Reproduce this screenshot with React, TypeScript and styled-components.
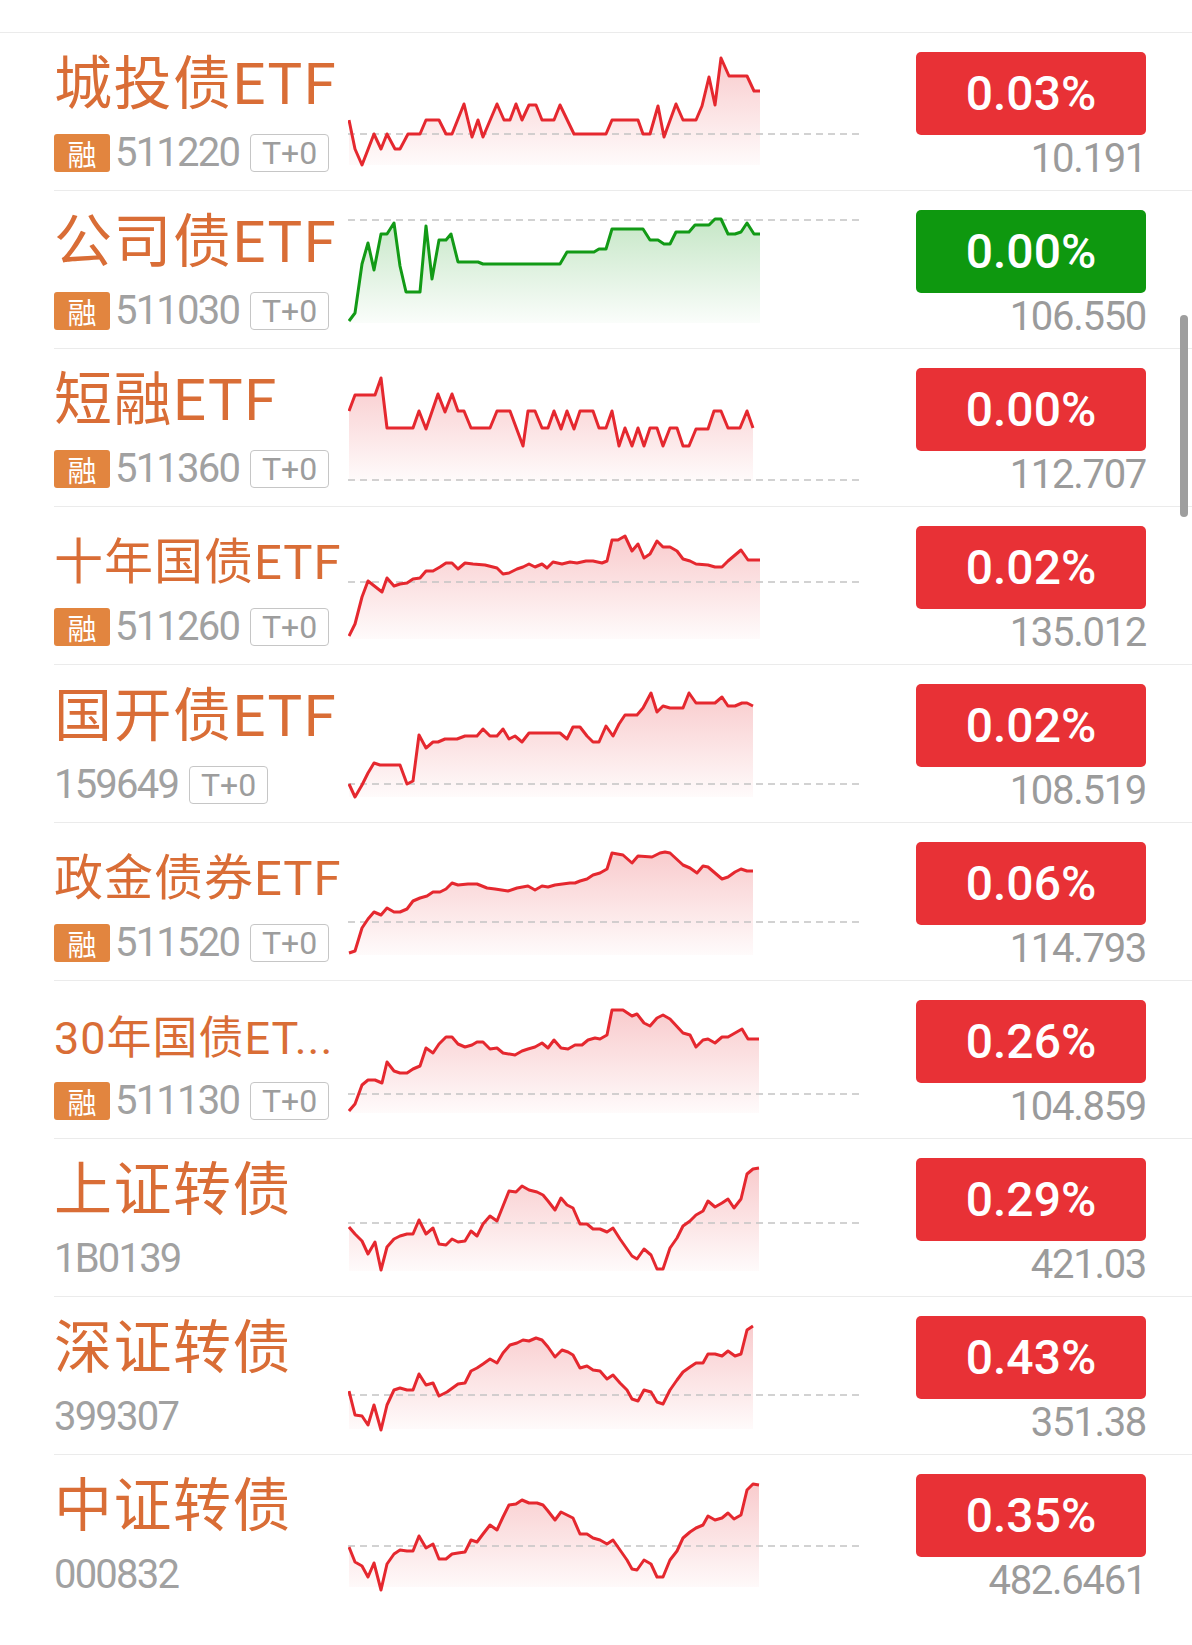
import React from "react";
import styled, { createGlobalStyle } from "styled-components";

type Pt = [number, number];

interface Fund {
  name: string;
  size: number;
  margin: boolean;
  code: string;
  t0: boolean;
  change: string;
  up: boolean;
  price: string;
  base: number;
  line: Pt[];
}

const funds: Fund[] = [
  {
    name: "城投债ETF", size: 58, margin: true, code: "511220", t0: true,
    change: "0.03%", up: true, price: "10.191", base: 101,
    line: [[1,87],[7,116],[14,132],[26,101],[33,116],[39,101],[47,116],[52,116],[60,101],[72,101],[78,87],[91,87],[98,101],[104,101],[116,71],[124,104],[130,87],[135,104],[149,71],[156,87],[162,87],[168,71],[174,87],[181,72],[188,72],[194,87],[206,87],[212,72],[226,101],[258,101],[264,87],[290,87],[295,101],[302,101],[310,73],[316,104],[328,71],[335,87],[348,87],[354,73],[361,44],[367,72],[373,25],[381,43],[399,43],[406,58],[412,58]],
  },
  {
    name: "公司债ETF", size: 58, margin: true, code: "511030", t0: true,
    change: "0.00%", up: false, price: "106.550", base: 29,
    line: [[1,130],[7,122],[14,73],[20,52],[26,79],[33,43],[39,43],[46,32],[52,75],[58,101],[72,101],[78,35],[84,88],[91,49],[98,49],[103,43],[110,71],[130,71],[135,73],[212,73],[219,61],[246,61],[251,58],[258,58],[264,38],[295,38],[302,49],[310,49],[316,53],[322,53],[328,41],[341,41],[347,34],[361,34],[367,28],[373,28],[380,43],[387,43],[393,41],[399,32],[406,43],[412,43]],
  },
  {
    name: "短融ETF", size: 58, margin: true, code: "511360", t0: true,
    change: "0.00%", up: true, price: "112.707", base: 131,
    line: [[1,62],[7,46],[27,46],[33,29],[39,79],[65,79],[71,62],[78,80],[90,45],[97,63],[104,45],[110,62],[116,62],[123,79],[142,79],[149,62],[162,62],[175,97],[180,62],[187,62],[194,79],[200,79],[206,62],[213,80],[219,62],[226,80],[232,62],[245,62],[251,79],[258,79],[264,62],[271,97],[277,79],[284,97],[290,79],[296,97],[302,79],[309,79],[315,97],[322,79],[329,79],[335,97],[341,97],[348,80],[360,80],[366,62],[373,62],[380,79],[392,79],[399,62],[405,79]],
  },
  {
    name: "十年国债ETF", size: 49, margin: true, code: "511260", t0: true,
    change: "0.02%", up: true, price: "135.012", base: 75,
    line: [[1,129],[7,117],[14,90],[20,74],[34,85],[39,71],[46,79],[52,77],[59,76],[65,72],[72,71],[78,64],[85,64],[92,60],[98,56],[104,56],[110,62],[117,56],[125,57],[137,58],[149,61],[155,67],[161,66],[169,62],[175,60],[181,57],[187,60],[194,57],[199,61],[205,55],[214,57],[222,55],[229,56],[238,54],[245,54],[254,56],[259,54],[264,33],[270,33],[277,29],[284,44],[290,37],[296,51],[302,47],[309,34],[315,40],[322,40],[329,44],[335,52],[342,54],[348,57],[360,58],[367,60],[374,60],[380,54],[393,43],[400,53],[412,53]],
  },
  {
    name: "国开债ETF", size: 58, margin: false, code: "159649", t0: true,
    change: "0.02%", up: true, price: "108.519", base: 119,
    line: [[1,119],[7,132],[14,120],[20,108],[26,98],[32,100],[52,100],[59,119],[65,116],[71,70],[78,83],[85,77],[90,77],[97,74],[109,74],[117,71],[129,71],[135,64],[142,71],[149,71],[155,64],[161,74],[167,71],[174,77],[181,68],[212,68],[219,74],[225,62],[232,62],[239,71],[245,77],[251,77],[258,61],[265,71],[271,59],[277,50],[289,50],[295,43],[303,28],[309,47],[315,41],[322,43],[335,43],[341,28],[348,38],[367,38],[374,32],[380,41],[387,41],[394,38],[399,38],[405,41]],
  },
  {
    name: "政金债券ETF", size: 49, margin: true, code: "511520", t0: true,
    change: "0.06%", up: true, price: "114.793", base: 99,
    line: [[1,130],[7,128],[14,105],[20,96],[26,89],[33,92],[39,85],[46,89],[52,89],[59,86],[65,78],[72,75],[79,73],[85,69],[92,69],[98,66],[104,60],[110,62],[120,61],[129,61],[139,65],[147,66],[160,68],[169,65],[180,63],[187,67],[194,63],[200,64],[207,62],[222,60],[227,60],[232,58],[239,56],[245,52],[252,50],[259,46],[264,30],[275,32],[284,40],[290,33],[304,34],[312,30],[317,29],[322,30],[335,42],[342,45],[349,50],[355,43],[360,44],[367,50],[374,56],[380,54],[387,49],[393,46],[399,48],[405,48]],
  },
  {
    name: "30年国债ET...", size: 45, margin: true, code: "511130", t0: true,
    change: "0.26%", up: true, price: "104.859", base: 113,
    line: [[1,130],[7,123],[14,104],[20,99],[27,99],[34,102],[39,81],[46,90],[52,92],[59,92],[65,88],[72,85],[78,67],[85,72],[91,63],[98,56],[104,56],[110,63],[117,66],[124,64],[129,61],[135,61],[142,68],[149,67],[155,72],[167,74],[174,70],[180,68],[187,66],[194,62],[200,67],[206,59],[213,67],[220,68],[227,64],[234,64],[240,59],[247,57],[252,58],[259,54],[264,29],[275,29],[284,35],[289,33],[296,42],[302,45],[309,37],[315,34],[322,38],[335,52],[342,54],[348,66],[355,59],[360,58],[367,62],[374,56],[380,56],[394,48],[400,58],[411,58]],
  },
  {
    name: "上证转债", size: 58, margin: false, code: "1B0139", t0: false,
    change: "0.29%", up: true, price: "421.03", base: 84,
    line: [[1,88],[7,95],[14,102],[20,115],[27,103],[33,131],[39,108],[46,100],[52,97],[59,95],[65,95],[71,81],[78,95],[85,89],[91,105],[98,106],[104,100],[110,103],[117,102],[123,92],[129,97],[135,85],[142,77],[149,82],[155,67],[161,52],[168,53],[174,47],[181,51],[189,53],[195,56],[200,62],[207,71],[213,59],[219,66],[225,69],[232,85],[239,85],[245,90],[252,90],[259,93],[265,89],[272,100],[279,110],[284,117],[289,120],[296,110],[303,116],[309,130],[315,130],[322,109],[329,99],[335,87],[342,82],[348,76],[355,72],[360,62],[367,68],[374,64],[380,60],[386,69],[393,60],[399,35],[405,30],[411,29]],
  },
  {
    name: "深证转债", size: 58, margin: false, code: "399307", t0: false,
    change: "0.43%", up: true, price: "351.38", base: 98,
    line: [[1,94],[7,118],[14,119],[20,128],[26,108],[33,133],[39,108],[46,93],[52,91],[59,93],[65,93],[71,77],[78,88],[85,86],[91,99],[99,95],[110,87],[117,86],[123,74],[129,71],[135,67],[142,62],[149,66],[155,56],[162,48],[169,46],[175,43],[181,44],[188,41],[194,43],[200,50],[207,60],[214,53],[220,55],[225,58],[232,71],[239,69],[245,73],[252,74],[259,82],[265,78],[272,86],[279,93],[284,102],[290,104],[296,93],[303,95],[309,105],[315,107],[322,93],[329,83],[335,75],[342,70],[348,66],[355,66],[360,57],[367,57],[374,59],[380,54],[387,59],[393,57],[399,33],[405,29]],
  },
  {
    name: "中证转债", size: 58, margin: false, code: "000832", t0: false,
    change: "0.35%", up: true, price: "482.6461", base: 91,
    line: [[1,92],[7,107],[14,111],[20,122],[26,108],[33,135],[39,109],[46,99],[52,95],[59,96],[65,96],[71,81],[78,93],[85,89],[91,104],[98,104],[104,99],[110,98],[117,97],[123,85],[129,87],[135,79],[142,70],[149,75],[155,62],[161,50],[168,49],[174,45],[181,48],[189,48],[195,50],[200,56],[207,65],[213,57],[219,60],[225,63],[232,79],[239,79],[245,83],[252,85],[259,89],[265,85],[272,95],[279,105],[284,114],[289,115],[296,105],[303,109],[309,122],[315,122],[322,105],[329,96],[335,83],[342,77],[348,73],[355,70],[360,61],[367,65],[374,63],[380,58],[386,64],[393,60],[399,35],[405,29],[411,30]],
  },
];

const RED = "#e5282f";
const GREEN = "#129a16";

function Spark({ line, base, up, id }: { line: Pt[]; base: number; up: boolean; id: string }) {
  const color = up ? RED : GREEN;
  const d = line.map(([x, y], i) => `${i ? "L" : "M"}${x} ${y}`).join(" ");
  const first = line[0][0];
  const last = line[line.length - 1][0];
  const area = `${d} L${last} 132 L${first} 132 Z`;

  return (
    <ChartSvg width={514} height={157} viewBox="0 0 514 157">
      <defs>
        <linearGradient id={id} x1="0" y1="0" x2="0" y2="1">
          <stop offset="0" stopColor={color} stopOpacity={0.24} />
          <stop offset="1" stopColor={color} stopOpacity={0.02} />
        </linearGradient>
      </defs>
      <path d={area} fill={`url(#${id})`} />
      <line x1={0} x2={512} y1={base} y2={base} stroke="#c4c4c4" strokeWidth={1.5} strokeDasharray="7 5" />
      <path d={d} fill="none" stroke={color} strokeWidth={3} strokeLinejoin="round" />
    </ChartSvg>
  );
}

export default function App() {
  return (
    <>
      <GlobalStyle />
      <Page>
        <TopBar />
        {funds.map((f, i) => (
          <Row key={f.code}>
            <Left>
              <Title $size={f.size}>{f.name}</Title>
              <Meta>
                {f.margin && <Badge>融</Badge>}
                <Code>{f.code}</Code>
                {f.t0 && <Tag>T+0</Tag>}
              </Meta>
            </Left>
            <Spark line={f.line} base={f.base} up={f.up} id={`fill${i}`} />
            <Right>
              <Pill $up={f.up}>{f.change}</Pill>
              <Price>{f.price}</Price>
            </Right>
          </Row>
        ))}
      </Page>
      <ScrollThumb />
    </>
  );
}

const GlobalStyle = createGlobalStyle`
  * { box-sizing: border-box; }
  html, body {
    margin: 0;
    background: #fff;
    overflow: hidden;
  }
  body {
    font-family: Roboto, "Noto Sans CJK SC", sans-serif;
  }
`;

const Page = styled.div`
  width: 1192px;
  min-height: 1645px;
  background: #fff;
`;

const TopBar = styled.div`
  height: 33px;
  border-bottom: 1px solid #ebebeb;
`;

const Row = styled.div`
  display: flex;
  height: 158px;
  margin-left: 54px;
  border-bottom: 1px solid #ebebeb;

  &:last-child {
    border-bottom: none;
  }
`;

const Left = styled.div`
  width: 294px;
  flex-shrink: 0;
  display: flex;
  flex-direction: column;
  padding-top: 22px;
`;

const Title = styled.div<{ $size: number }>`
  height: 58px;
  display: flex;
  align-items: flex-end;
  font-family: Roboto, "Noto Sans CJK SC", sans-serif;
  font-size: ${(p) => p.$size}px;
  letter-spacing: ${(p) => (p.$size > 50 ? 1.5 : 1)}px;
  line-height: 1;
  color: #d96d36;
  white-space: nowrap;
`;

const Meta = styled.div`
  display: flex;
  align-items: center;
  gap: 5px;
  height: 38px;
  margin-top: 21px;
`;

const Badge = styled.span`
  width: 56px;
  height: 38px;
  border-radius: 3px;
  background: #e2853f;
  color: #fff;
  display: flex;
  align-items: center;
  justify-content: center;
  font-family: "Noto Sans CJK SC", sans-serif;
  font-size: 29px;
  line-height: 1;
`;

const Code = styled.span`
  font-family: Roboto, sans-serif;
  font-size: 40px;
  letter-spacing: -1.8px;
  line-height: 1;
  color: #a1a1a1;
`;

const Tag = styled.span`
  margin-left: 6px;
  width: 79px;
  height: 38px;
  border: 1.5px solid #c6c6c6;
  border-radius: 4px;
  display: flex;
  align-items: center;
  justify-content: center;
  font-family: Roboto, sans-serif;
  font-size: 32px;
  line-height: 1;
  color: #9d9d9d;
`;

const ChartSvg = styled.svg`
  display: block;
  flex-shrink: 0;
`;

const Right = styled.div`
  flex: 1;
  display: flex;
  flex-direction: column;
  align-items: flex-end;
  padding-top: 19px;
  padding-right: 46px;
`;

const Pill = styled.div<{ $up: boolean }>`
  width: 230px;
  height: 83px;
  border-radius: 5px;
  background: ${(p) => (p.$up ? "#e83136" : "#0e980f")};
  color: #fff;
  display: flex;
  align-items: center;
  justify-content: center;
  font-family: Roboto, sans-serif;
  font-weight: 500;
  font-size: 48px;
  line-height: 1;
`;

const Price = styled.div`
  margin-top: 4px;
  font-family: Roboto, sans-serif;
  font-size: 40px;
  letter-spacing: -1.3px;
  line-height: 1;
  color: #9b9b9b;
`;

const ScrollThumb = styled.div`
  position: fixed;
  top: 315px;
  right: 4px;
  width: 8px;
  height: 202px;
  border-radius: 4px;
  background: #9e9e9e;
`;
